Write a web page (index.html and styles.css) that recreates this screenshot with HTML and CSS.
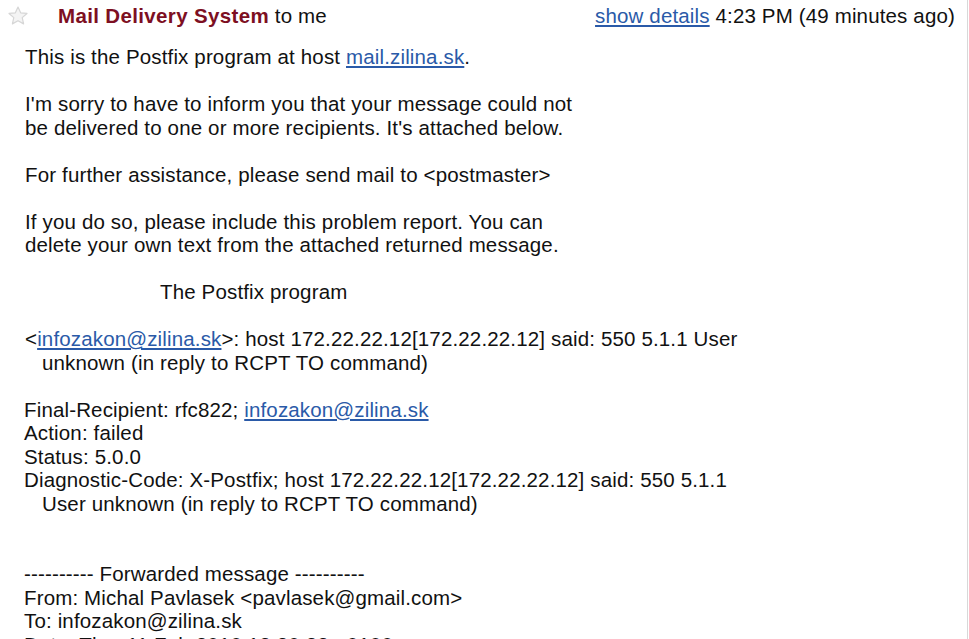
FILE: index.html
```html
<!DOCTYPE html>
<html lang="en">
<head>
    <meta charset="UTF-8">
    <title>Delivery Status Notification</title>
    <link rel="stylesheet" href="styles.css">
</head>
<body>
    <div class="message">
        <div class="header">
            <span class="star">
                <svg width="22" height="22" viewBox="0 0 24 24">
                    <path d="M12 2.2l2.9 6.3 6.9.7-5.2 4.6 1.5 6.8L12 17.1l-6.1 3.5 1.5-6.8-5.2-4.6 6.9-.7z" fill="#f4f4f4" stroke="#d6d6d6" stroke-width="1.3" stroke-linejoin="round"/>
                </svg>
            </span>
            <span class="sender"><b class="name">Mail Delivery System</b> to me</span>
            <span class="date"><a href="#">show details</a> 4:23 PM (49 minutes ago)</span>
        </div>

        <div class="body">
            <div class="line">This is the Postfix program at host <a href="#">mail.zilina.sk</a>.</div>
            <div class="blank"></div>
            <div class="line">I'm sorry to have to inform you that your message could not</div>
            <div class="line">be delivered to one or more recipients. It's attached below.</div>
            <div class="blank"></div>
            <div class="line">For further assistance, please send mail to &lt;postmaster&gt;</div>
            <div class="blank"></div>
            <div class="line">If you do so, please include this problem report. You can</div>
            <div class="line">delete your own text from the attached returned message.</div>
            <div class="blank"></div>
            <div class="line signature">The Postfix program</div>
            <div class="blank"></div>
            <div class="line">&lt;<a href="#">infozakon@zilina.sk</a>&gt;: host 172.22.22.12[172.22.22.12] said: 550 5.1.1 User</div>
            <div class="line indent">unknown (in reply to RCPT TO command)</div>
            <div class="blank"></div>
            <div class="line flush">Final-Recipient: rfc822; <a href="#">infozakon@zilina.sk</a></div>
            <div class="line flush">Action: failed</div>
            <div class="line flush">Status: 5.0.0</div>
            <div class="line flush">Diagnostic-Code: X-Postfix; host 172.22.22.12[172.22.22.12] said: 550 5.1.1</div>
            <div class="line indent">User unknown (in reply to RCPT TO command)</div>
            <div class="blank"></div>
            <div class="blank"></div>
            <div class="line flush">---------- Forwarded message ----------</div>
            <div class="line flush">From: Michal Pavlasek &lt;pavlasek@gmail.com&gt;</div>
            <div class="line flush">To: infozakon@zilina.sk</div>
            <div class="line flush">Date: Thu, 11 Feb 2010 12:30:32 +0100</div>
        </div>
    </div>
</body>
</html>
```

FILE: styles.css
```css
body {
    margin: 0;
    background-color: #ffffff;
    color: #111111;
    font-family: "Liberation Sans", Arial, sans-serif;
    font-size: 20.5px;
    letter-spacing: 0.15px;
    overflow: hidden;
}
a {
    color: #2a5aa8;
    text-decoration: underline;
}
.message {
    border-right: 1px solid #d8d8d8;
    width: 967px;
}
.header {
    display: flex;
    align-items: center;
    height: 32px;
    padding: 0 12px 0 7px;
}
.star {
    display: flex;
    width: 51px;
}
.sender {
    flex: 1;
}
.name {
    color: #7d0f22;
    letter-spacing: 0.35px;
}
.date {
    white-space: nowrap;
}
.message .body {
    padding: 13px 0 0 25px;
}
.line {
    height: 23.5px;
    line-height: 23.5px;
    white-space: nowrap;
}
.blank {
    height: 23.5px;
}
.flush {
    margin-left: -1px;
}
.indent {
    padding-left: 17px;
}
.signature {
    padding-left: 135px;
}
```
